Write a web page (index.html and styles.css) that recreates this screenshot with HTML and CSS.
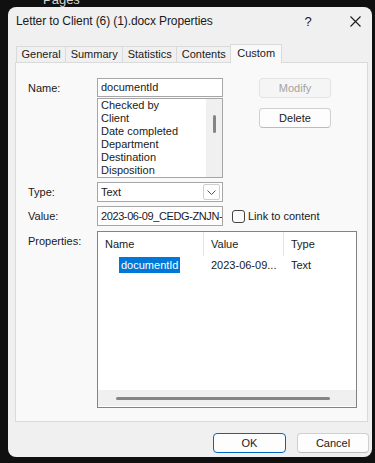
FILE: index.html
```html
<!DOCTYPE html>
<html lang="en">
  <head>
    <meta charset="UTF-8" />
    <meta name="viewport" content="width=device-width, initial-scale=1.0" />
    <title>Letter to Client (6) (1).docx Properties</title>
    <link rel="stylesheet" href="styles.css">
  </head>
  <body>
    <div class="desktop-label">Pages</div>

    <div class="dialog">
      <div class="titlebar">
        <span class="title">Letter to Client (6) (1).docx Properties</span>
        <span class="caption-btn help">?</span>
        <span class="caption-btn close">
          <svg width="11" height="11" viewBox="0 0 11 11">
            <path d="M0.5 0.5 L10.5 10.5 M10.5 0.5 L0.5 10.5" stroke="#1b1b1b" stroke-width="1.1" fill="none" />
          </svg>
        </span>
      </div>

      <div class="tabs">
        <div class="tab">General</div>
        <div class="tab">Summary</div>
        <div class="tab">Statistics</div>
        <div class="tab">Contents</div>
        <div class="tab active">Custom</div>
      </div>

      <div class="panel">
        <div class="form">
          <div class="lbl">Name:</div>
          <div class="name-stack">
            <div class="field">documentId</div>
            <div class="listbox">
              <ul class="list-items">
                <li>Checked by</li>
                <li>Client</li>
                <li>Date completed</li>
                <li>Department</li>
                <li>Destination</li>
                <li>Disposition</li>
              </ul>
              <div class="vscroll"><span class="vthumb"></span></div>
            </div>
          </div>
          <div class="side-buttons">
            <button class="btn btn-disabled">Modify</button>
            <button class="btn">Delete</button>
          </div>

          <div class="lbl">Type:</div>
          <div class="field combo">
            <span>Text</span>
            <span class="combo-arrow">
              <svg width="9" height="5" viewBox="0 0 9 5">
                <path d="M0.5 0.5 L4.5 4.5 L8.5 0.5" stroke="#555" stroke-width="1" fill="none" />
              </svg>
            </span>
          </div>
          <div></div>

          <div class="lbl">Value:</div>
          <div class="field value-field">2023-06-09_CEDG-ZNJN-</div>
          <label class="link-check">
            <span class="checkbox"></span>
            Link to content
          </label>

          <div class="lbl props-lbl">Properties:</div>
          <div class="listview">
            <div class="lv-header">
              <div class="col col-name">Name</div>
              <div class="col col-value">Value</div>
              <div class="col col-type">Type</div>
            </div>
            <div class="lv-row">
              <div class="col col-name"><span class="selected">documentId</span></div>
              <div class="col col-value">2023-06-09...</div>
              <div class="col col-type">Text</div>
            </div>
            <div class="lv-space"></div>
            <div class="hscroll"><span class="hthumb"></span></div>
          </div>
        </div>
      </div>

      <div class="footer">
        <button class="btn btn-default">OK</button>
        <button class="btn">Cancel</button>
      </div>
    </div>
  </body>
</html>
```

FILE: styles.css
```css
* {
  margin: 0;
  padding: 0;
  box-sizing: border-box;
}

body {
  font-family: "Liberation Sans", Arial, sans-serif;
  font-size: 11px;
  color: #1a1a1a;
  background: #101010;
  height: 463px;
  overflow: hidden;
  padding: 7px 0 0 8px;
}

.desktop-label {
  position: absolute;
  left: 43px;
  top: -8px;
  font-size: 13px;
  color: #d6d6d6;
}

.dialog {
  position: relative;
  width: 364px;
  height: 450px;
  background: #f0f0f0;
  border-radius: 8px;
}

/* barre de titre */
.titlebar {
  height: 28px;
  display: flex;
  align-items: center;
  padding: 0 7px 0 8px;
}

.title {
  flex: 1;
  font-size: 12px;
  letter-spacing: -0.1px;
  color: #1a1a1a;
}

.caption-btn {
  width: 20px;
  height: 20px;
  display: flex;
  align-items: center;
  justify-content: center;
}

.help {
  font-size: 13px;
  margin-right: 27px;
}

/* onglets */
.tabs {
  display: flex;
  align-items: flex-end;
  height: 18px;
  margin: 9px 0 0 8px;
}

.tab {
  height: 16px;
  line-height: 15px;
  padding: 0 4.5px;
  border: 1px solid #dadada;
  border-bottom: none;
  margin-right: -1px;
  background: #f0f0f0;
  color: #1a1a1a;
}

.tab.active {
  position: relative;
  z-index: 1;
  height: 19px;
  line-height: 16px;
  margin-bottom: -1px;
  padding: 0 6px;
  background: #f9f9f9;
}

.panel {
  margin: 0 4px 0 7px;
  height: 360px;
  background: #f9f9f9;
  border: 1px solid #dadada;
  padding: 15px 0 0 12px;
}

.form {
  display: grid;
  grid-template-columns: 69px 126px 1fr;
  grid-template-rows: 100px 20px 20px 178px;
  row-gap: 4px;
}

.lbl {
  line-height: 20px;
}

.props-lbl {
  margin-top: 1px;
}

.field {
  background: #fff;
  border: 1px solid #a6a6a6;
  height: 20px;
  line-height: 18px;
  padding-left: 3px;
  white-space: nowrap;
  overflow: hidden;
}

.name-stack .field {
  height: 19px;
  line-height: 17px;
  margin-bottom: 1px;
}

.listbox {
  display: flex;
  height: 80px;
  background: #fff;
  border: 1px solid #a6a6a6;
}

.list-items {
  flex: 1;
  list-style: none;
  padding-left: 3px;
}

.list-items li {
  line-height: 13px;
}

.vscroll {
  width: 16px;
  background: #f0f0f0;
  display: flex;
  justify-content: center;
  padding-top: 16px;
}

.vthumb {
  width: 3px;
  height: 18px;
  background: #858585;
  border-radius: 2px;
}

.side-buttons {
  display: flex;
  flex-direction: column;
  gap: 10px;
  padding-left: 36px;
}

.btn {
  width: 72px;
  height: 20px;
  font-family: inherit;
  font-size: 11px;
  color: #1a1a1a;
  background: #fdfdfd;
  border: 1px solid #d0d0d0;
  border-bottom-color: #bcbcbc;
  border-radius: 4px;
}

.btn-disabled {
  color: #a3a3a3;
  background: #f5f5f5;
  border-color: #e3e3e3;
}

.btn-default {
  width: 73px;
  border: 1px solid #0067c0;
}

.combo {
  display: flex;
  align-items: center;
  justify-content: space-between;
  padding-right: 2px;
}

.combo-arrow {
  width: 17px;
  height: 16px;
  border: 1px solid #cfcfcf;
  border-radius: 2px;
  display: flex;
  align-items: center;
  justify-content: center;
}

.value-field {
  letter-spacing: -0.4px;
}

.link-check {
  display: flex;
  align-items: center;
  gap: 3px;
  padding-left: 9px;
  white-space: nowrap;
}

.checkbox {
  width: 13px;
  height: 13px;
  border: 1px solid #444;
  border-radius: 3px;
  background: #fbfbfb;
}

/* liste des proprietes */
.listview {
  grid-column: 2 / 4;
  width: 260px;
  margin-top: 1px;
  background: #fff;
  border: 1px solid #838383;
  display: flex;
  flex-direction: column;
}

.lv-header,
.lv-row {
  display: flex;
}

.lv-header {
  height: 24px;
  line-height: 24px;
}

.lv-header .col + .col {
  border-left: 1px solid #e5e5e5;
}

.col {
  padding-left: 7px;
  white-space: nowrap;
  overflow: hidden;
}

.col-name {
  width: 105px;
}

.col-value {
  width: 80px;
}

.col-type {
  flex: 1;
}

.lv-row {
  margin-top: 1px;
  height: 16px;
  line-height: 16px;
}

.lv-row .col-value,
.lv-row .col-type {
  padding-left: 8px;
}

.lv-row .col-name {
  padding-left: 21px;
}

.selected {
  display: inline-block;
  background: #0078d7;
  color: #fff;
  padding: 0 2px;
}

.lv-space {
  flex: 1;
}

.hscroll {
  height: 16px;
  margin-bottom: 1px;
  background: #f0f0f0;
  display: flex;
  align-items: center;
  padding-left: 18px;
}

.hthumb {
  width: 214px;
  height: 3px;
  background: #858585;
  border-radius: 2px;
}

.footer {
  display: flex;
  justify-content: flex-end;
  gap: 11px;
  padding: 11px 3px 0 0;
}
```
